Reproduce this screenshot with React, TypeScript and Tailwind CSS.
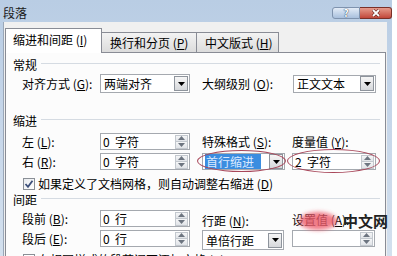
import React from "react";

function Tri({ up = false, color = "#000" }: { up?: boolean; color?: string }) {
  return (
    <svg width="7" height="4" viewBox="0 0 7 4" className="block">
      {up ? <path d="M0 4 L3.5 0 L7 4 Z" fill={color} /> : <path d="M0 0 L7 0 L3.5 4 Z" fill={color} />}
    </svg>
  );
}

function DropBtn() {
  return (
    <div className="w-[14px] h-[15px] border border-[#8e949c] bg-gradient-to-b from-[#f6f6f6] to-[#d6d8db] flex items-center justify-center shrink-0">
      <Tri />
    </div>
  );
}

function Select({ text, cls, hi = false }: { text: string; cls: string; hi?: boolean }) {
  return (
    <div className={`flex items-center border border-[#a5a9af] bg-white pl-[2px] pr-[1px] ${cls}`}>
      <span
        className={`flex-1 text-[12px] leading-[15px] h-[15px] pl-[1px] ${
          hi ? "bg-[#3b8de0] text-[#dbeaff] mr-[8px]" : "text-black"
        }`}
      >
        {text}
      </span>
      <DropBtn />
    </div>
  );
}

function Spin({ text, cls }: { text: string; cls: string }) {
  return (
    <div className={`flex items-center border border-[#a5a9af] bg-white pr-[1px] ${cls}`}>
      <span className="flex-1 pl-[2px] text-[12px] leading-none text-black whitespace-pre">{text}</span>
      <div className="flex flex-col">
        <div className="w-[13px] h-[7px] bg-gradient-to-b from-[#f5f6f7] to-[#e1e4e8] border border-[#c3c8ce] flex items-center justify-center">
          <Tri up color="#6d7580" />
        </div>
        <div className="w-[13px] h-[7px] bg-gradient-to-b from-[#f5f6f7] to-[#e1e4e8] border border-t-0 border-[#c3c8ce] flex items-center justify-center">
          <Tri color="#6d7580" />
        </div>
      </div>
    </div>
  );
}

function Label({ main, key1, cls }: { main: string; key1: string; cls: string }) {
  return (
    <div className={`text-[12px] leading-none text-black whitespace-nowrap ${cls}`}>
      {main} (<span className="underline">{key1}</span>):
    </div>
  );
}

function Header({ text, cls }: { text: string; cls: string }) {
  return (
    <div className={`flex items-start ${cls}`}>
      <span className="pl-[7px] text-[12px] leading-[13px] text-black">{text}</span>
      <div className="flex-1 h-px bg-[#d5dbe2] ml-[4px] mr-[5px] mt-[5px]" />
    </div>
  );
}

export default function App() {
  return (
    <div className="w-[397px] h-[256px] overflow-hidden bg-white relative font-['Noto_Sans_CJK_SC',sans-serif]">
      <div className="w-[392px] h-[256px] flex flex-col bg-gradient-to-b from-[#b9cde4] via-[#c7d7ea] to-[#d3e0ee]">
        {/* title bar */}
        <div className="h-[22px] flex items-start shrink-0">
          <span className="pl-[3px] mt-[7px] text-[12px] leading-none text-[#1a1a1a]">段落</span>
          <div className="ml-auto mt-[7px] flex">
            <div className="w-[28px] h-[12px] rounded-l-[3px] border border-[#7f93ae] bg-gradient-to-b from-[#e3ecf7] to-[#a9c0dd] flex items-center justify-center">
              <span className="text-[10px] leading-none font-bold text-white [text-shadow:0_0_1px_#2b3f5e,0_0_1px_#2b3f5e]">?</span>
            </div>
            <div className="w-[32px] h-[12px] rounded-r-[3px] border border-l-0 border-[#7a3028] bg-gradient-to-b from-[#e59a8c] to-[#c1463a] flex items-center justify-center">
              <svg width="10" height="8" viewBox="0 0 10 8">
                <path d="M2 1 L8 7 M8 1 L2 7" stroke="#5a1a12" strokeWidth="3" />
                <path d="M2 1 L8 7 M8 1 L2 7" stroke="#ffffff" strokeWidth="1.8" />
              </svg>
            </div>
          </div>
        </div>
        {/* client */}
        <div className="flex-1 ml-[3px] mr-[5px] bg-[#f0f0f0] border-l border-[#9aa7b8] pt-[6px] pl-[1px] pr-[1px] flex flex-col">
          {/* tabs */}
          <div className="flex items-end h-[24px] shrink-0">
            <div className="relative z-10 w-[97px] h-[25px] -mb-px bg-white border border-b-0 border-[#898c95] flex items-center pl-[7px] pb-[2px]">
              <span className="text-[12px] leading-none text-black whitespace-nowrap">
                缩进和间距 (<span className="underline">I</span>)
              </span>
            </div>
            <div className="w-[95px] h-[20px] bg-gradient-to-b from-[#f3f3f3] to-[#dcdcdc] border border-l-0 border-b-0 border-[#898c95] flex items-center pl-[8px]">
              <span className="text-[12px] leading-none text-black whitespace-nowrap">
                换行和分页 (<span className="underline">P</span>)
              </span>
            </div>
            <div className="w-[82px] h-[20px] bg-gradient-to-b from-[#f3f3f3] to-[#dcdcdc] border border-l-0 border-b-0 border-[#898c95] flex items-center pl-[8px]">
              <span className="text-[12px] leading-none text-black whitespace-nowrap">
                中文版式 (<span className="underline">H</span>)
              </span>
            </div>
          </div>
          {/* panel */}
          <div className="flex-1 bg-[#fcfcfc] border border-[#898c95] flex flex-col">
            <Header text="常规" cls="mt-[5px] h-[14px]" />
            <div className="mt-[2px] h-[19px] flex items-center">
              <Label main="对齐方式" key1="G" cls="pl-[16px] w-[94px]" />
              <Select text="两端对齐" cls="w-[90px] h-[19px]" />
              <Label main="大纲级别" key1="O" cls="ml-[12px] w-[91px]" />
              <Select text="正文文本" cls="w-[83px] h-[18px]" />
            </div>

            <Header text="缩进" cls="mt-[21px] h-[14px]" />
            <div className="mt-[5px] h-[17px] flex items-center">
              <Label main="左" key1="L" cls="pl-[16px] w-[94px]" />
              <Spin text="0  字符" cls="w-[90px] h-[17px]" />
              <Label main="特殊格式" key1="S" cls="ml-[12px] w-[90px]" />
              <Label main="度量值" key1="Y" cls="" />
            </div>
            <div className="mt-[3px] h-[17px] flex items-center">
              <Label main="右" key1="R" cls="pl-[16px] w-[94px]" />
              <Spin text="0  字符" cls="w-[90px] h-[17px]" />
              <Select text="首行缩进" cls="ml-[12px] w-[83px] h-[17px]" hi />
              <Spin text="2  字符" cls="ml-[7px] w-[84px] h-[17px]" />
            </div>
            <div className="mt-[7px] h-[13px] flex items-center pl-[17px]">
              <div className="w-[12px] h-[12px] border border-[#8a8f96] bg-gradient-to-br from-[#e8ebef] to-[#ffffff] flex items-center justify-center">
                <svg width="10" height="10" viewBox="0 0 10 10">
                  <path d="M1.5 5 L4 7.8 L8.5 1.8" stroke="#3c4f7a" strokeWidth="1.8" fill="none" />
                </svg>
              </div>
              <span className="ml-[3px] text-[12px] leading-none text-black whitespace-nowrap">
                如果定义了文档网格，则自动调整右缩进 (<span className="underline">D</span>)
              </span>
            </div>

            <Header text="间距" cls="mt-[3px] h-[13px]" />
            <div className="mt-[4px] h-[17px] flex items-center">
              <Label main="段前" key1="B" cls="pl-[16px] w-[94px]" />
              <Spin text="0  行" cls="w-[90px] h-[17px]" />
              <Label main="行距" key1="N" cls="ml-[12px] w-[90px] self-end mb-[0px]" />
              <Label main="设置值" key1="A" cls="self-end mb-[1px]" />
            </div>
            <div className="mt-[3px] h-[20px] flex items-start">
              <Label main="段后" key1="E" cls="pl-[16px] w-[94px] mt-[3px]" />
              <Spin text="0  行" cls="w-[90px] h-[17px]" />
              <Select text="单倍行距" cls="ml-[12px] w-[82px] h-[20px]" />
              <Spin text="" cls="ml-[8px] w-[83px] h-[17px]" />
            </div>
            <div className="mt-[3px] h-[13px] flex items-center pl-[17px]">
              <div className="w-[12px] h-[12px] border border-[#8a8f96] bg-white" />
              <span className="ml-[3px] text-[12px] leading-none text-black whitespace-nowrap">
                在相同样式的段落间不添加空格 (<span className="underline">C</span>)
              </span>
            </div>
          </div>
        </div>
      </div>

      {/* annotation ellipses */}
      <div className="absolute left-[197px] top-[150px] w-[89px] h-[22px] rounded-[50%] border-[1.5px] border-[#a8475a]" />
      <div className="absolute left-[287px] top-[149px] w-[93px] h-[24px] rounded-[50%] border-[1.5px] border-[#a8475a]" />

      {/* watermark */}
      <div className="absolute left-[299px] top-[212px] w-[38px] h-[18px] rounded-[50%] bg-[#ee5d6c] opacity-80 blur-[2px]" />
      <div className="absolute left-[343px] top-[212px] text-[15px] leading-[17px] font-bold text-[#222] whitespace-nowrap">
        中文网
      </div>
    </div>
  );
}
